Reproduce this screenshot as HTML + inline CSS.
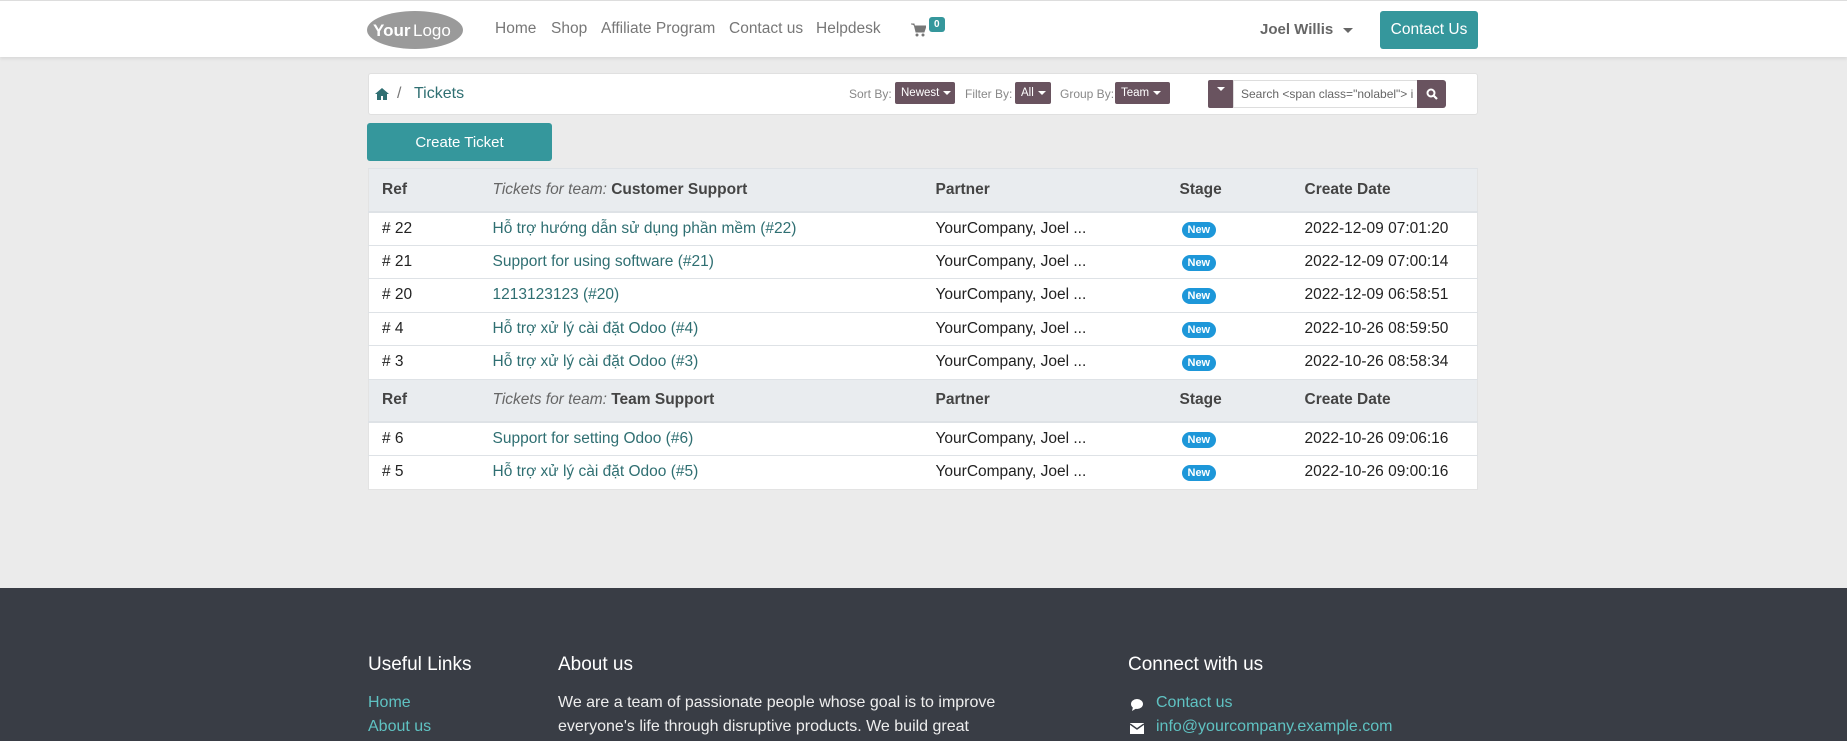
<!DOCTYPE html>
<html><head><meta charset="utf-8"><style>
*{box-sizing:border-box;margin:0;padding:0}
body{width:1847px;height:741px;overflow:hidden;background:#ebebeb;font-family:"Liberation Sans","Noto Sans CJK SC",sans-serif;position:relative;color:#333}
.a{position:absolute;white-space:nowrap}
header{position:absolute;left:0;top:0;width:1847px;height:57px;background:#fff;border-top:1px solid #ddd;box-shadow:0 2px 3px rgba(0,0,0,.08)}
.nav{font-size:15.5px;color:#777;top:19px}
.pbtn{position:absolute;background:#69535f;color:#fff;font-size:11.5px;border-radius:2px;height:22px;line-height:22px;padding-left:6px}
.car{display:inline-block;border-left:4px solid transparent;border-right:4px solid transparent;border-top:4px solid #fff;vertical-align:middle;margin-left:4px}
.lbl{font-size:12px;color:#888;top:87px}
table{position:absolute;left:368px;top:168px;width:1110px;border-collapse:collapse;background:#fff;font-size:15.5px;border:1px solid #e3e3e3}
td,th{height:33.5px;padding:0;text-align:left;border-top:1px solid #dee2e6;color:#222;font-weight:normal}
tr.h td{height:43px;background:#e9ecef;font-weight:bold;color:#444;border-bottom:2px solid #dee2e6}
td:nth-child(1){padding-left:13px;width:124px}
td:nth-child(2){width:443px}
td:nth-child(3){width:244px}
td:nth-child(4){width:125px}
.lk{color:#2f6f72}
.i{font-style:italic;font-weight:normal;color:#666}
.b{display:inline-block;background:#1d97d9;color:#fff;font-size:11px;font-weight:bold;border-radius:9px;padding:2px 6px;margin-left:2px}
footer{position:absolute;left:0;top:588px;width:1847px;height:153px;background:#393d45;color:#fff}
footer .h{font-size:19px;top:66px}
footer .t{font-size:16px;color:#eee}
footer .l{color:#5fc2c2;font-size:16px}
</style></head><body>
<header>
 <svg class="a" style="left:366px;top:9px" width="98" height="40"><ellipse cx="49" cy="20" rx="48" ry="19" fill="#9a9a9a"/><text x="7" y="26" font-family="Liberation Sans" font-size="17" font-weight="bold" fill="#fff">Your</text><text x="47" y="26" font-family="Liberation Sans" font-size="17" fill="#fff">Logo</text></svg>
 <span class="a nav" style="left:495px">Home</span>
 <span class="a nav" style="left:551px">Shop</span>
 <span class="a nav" style="left:601px">Affiliate Program</span>
 <span class="a nav" style="left:729px">Contact us</span>
 <span class="a nav" style="left:816px">Helpdesk</span>
 <svg class="a" style="left:911px;top:22px" width="15" height="14" viewBox="0 0 15 14"><path d="M0 1h3l2 8h8l2-6H4" fill="#777" stroke="#777"/><circle cx="6" cy="12" r="1.5" fill="#777"/><circle cx="12" cy="12" r="1.5" fill="#777"/></svg>
 <span class="a" style="left:929px;top:16px;background:#35979c;color:#fff;font-size:10px;font-weight:bold;padding:2px 5px;border-radius:3px">0</span>
 <span class="a" style="left:1260px;top:20px;font-size:15px;font-weight:bold;color:#666">Joel Willis <span class="car" style="border-top-color:#666;border-width:5px 5px 0;margin-left:6px"></span></span>
 <span class="a" style="left:1380px;top:10px;width:98px;height:38px;background:#35979c;border-radius:3px;color:#fff;font-size:15.5px;line-height:38px;text-align:center">Contact Us</span>
</header>

<div class="a" style="left:368px;top:73px;width:1110px;height:42px;background:#fff;border:1px solid #e0e0e0;border-radius:3px"></div>
<svg class="a" style="left:375px;top:88px" width="14" height="12" viewBox="0 0 14 12"><path d="M7 0L0 6h2v6h4V8h2v4h4V6h2z" fill="#2f6f72"/></svg>
<span class="a" style="left:397px;top:85px;font-size:16px;color:#777">/</span>
<span class="a" style="left:414px;top:85px;font-size:16px;color:#2f6f72">Tickets</span>
<span class="a lbl" style="left:849px">Sort By:</span>
<span class="pbtn" style="left:895px;top:82px;width:60px">Newest<span class="car"></span></span>
<span class="a lbl" style="left:965px">Filter By:</span>
<span class="pbtn" style="left:1015px;top:82px;width:36px">All<span class="car"></span></span>
<span class="a lbl" style="left:1060px">Group By:</span>
<span class="pbtn" style="left:1115px;top:82px;width:55px">Team<span class="car"></span></span>
<span class="pbtn" style="left:1208px;top:80px;width:26px;height:28px;padding-left:9px"><span class="car" style="margin:0 0 4px"></span></span>
<span class="a" style="left:1233px;top:80px;width:185px;height:28px;border:1px solid #ddd;font-size:12px;color:#666;line-height:26px;padding-left:7px;overflow:hidden">Search &lt;span class="nolabel"&gt; i</span>
<span class="pbtn" style="left:1417px;top:80px;width:29px;height:28px;border-radius:0 3px 3px 0"></span>
<svg class="a" style="left:1426px;top:88px" width="12" height="12"><circle cx="5" cy="5" r="3.5" stroke="#fff" stroke-width="2" fill="none"/><path d="M7.5 7.5L11 11" stroke="#fff" stroke-width="2.2"/></svg>

<span class="a" style="left:367px;top:123px;width:185px;height:38px;background:#35979c;border-radius:3px;color:#fff;font-size:15px;line-height:40px;text-align:center">Create Ticket</span>

<table>
<tr class="h"><td>Ref</td><td><span class="i">Tickets for team:</span> Customer Support</td><td>Partner</td><td>Stage</td><td>Create Date</td></tr>
<tr><td># 22</td><td class="lk">Hỗ trợ hướng dẫn sử dụng phần mềm (#22)</td><td>YourCompany, Joel ...</td><td><span class="b">New</span></td><td>2022-12-09 07:01:20</td></tr>
<tr><td># 21</td><td class="lk">Support for using software (#21)</td><td>YourCompany, Joel ...</td><td><span class="b">New</span></td><td>2022-12-09 07:00:14</td></tr>
<tr><td># 20</td><td class="lk">1213123123 (#20)</td><td>YourCompany, Joel ...</td><td><span class="b">New</span></td><td>2022-12-09 06:58:51</td></tr>
<tr><td># 4</td><td class="lk">Hỗ trợ xử lý cài đặt Odoo (#4)</td><td>YourCompany, Joel ...</td><td><span class="b">New</span></td><td>2022-10-26 08:59:50</td></tr>
<tr><td># 3</td><td class="lk">Hỗ trợ xử lý cài đặt Odoo (#3)</td><td>YourCompany, Joel ...</td><td><span class="b">New</span></td><td>2022-10-26 08:58:34</td></tr>
<tr class="h"><td>Ref</td><td><span class="i">Tickets for team:</span> Team Support</td><td>Partner</td><td>Stage</td><td>Create Date</td></tr>
<tr><td># 6</td><td class="lk">Support for setting Odoo (#6)</td><td>YourCompany, Joel ...</td><td><span class="b">New</span></td><td>2022-10-26 09:06:16</td></tr>
<tr><td># 5</td><td class="lk">Hỗ trợ xử lý cài đặt Odoo (#5)</td><td>YourCompany, Joel ...</td><td><span class="b">New</span></td><td>2022-10-26 09:00:16</td></tr>
</table>

<footer>
 <span class="a h" style="left:368px">Useful Links</span>
 <span class="a h" style="left:558px">About us</span>
 <span class="a h" style="left:1128px">Connect with us</span>
 <span class="a l" style="left:368px;top:106px">Home</span>
 <span class="a l" style="left:368px;top:130px">About us</span>
 <span class="a t" style="left:558px;top:106px">We are a team of passionate people whose goal is to improve</span>
 <span class="a t" style="left:558px;top:130px">everyone's life through disruptive products. We build great</span>
 <svg class="a" style="left:1130px;top:110px" width="14" height="14"><ellipse cx="7" cy="6" rx="6" ry="5" fill="#fff"/><path d="M3 9L2 13L7 10z" fill="#fff"/></svg>
 <span class="a l" style="left:1156px;top:106px">Contact us</span>
 <svg class="a" style="left:1130px;top:135px" width="14" height="11"><rect width="14" height="11" fill="#fff"/><path d="M0 1L7 6L14 1" stroke="#393d45" stroke-width="1.5" fill="none"/></svg>
 <span class="a l" style="left:1156px;top:130px">info@yourcompany.example.com</span>
</footer>
</body></html>
